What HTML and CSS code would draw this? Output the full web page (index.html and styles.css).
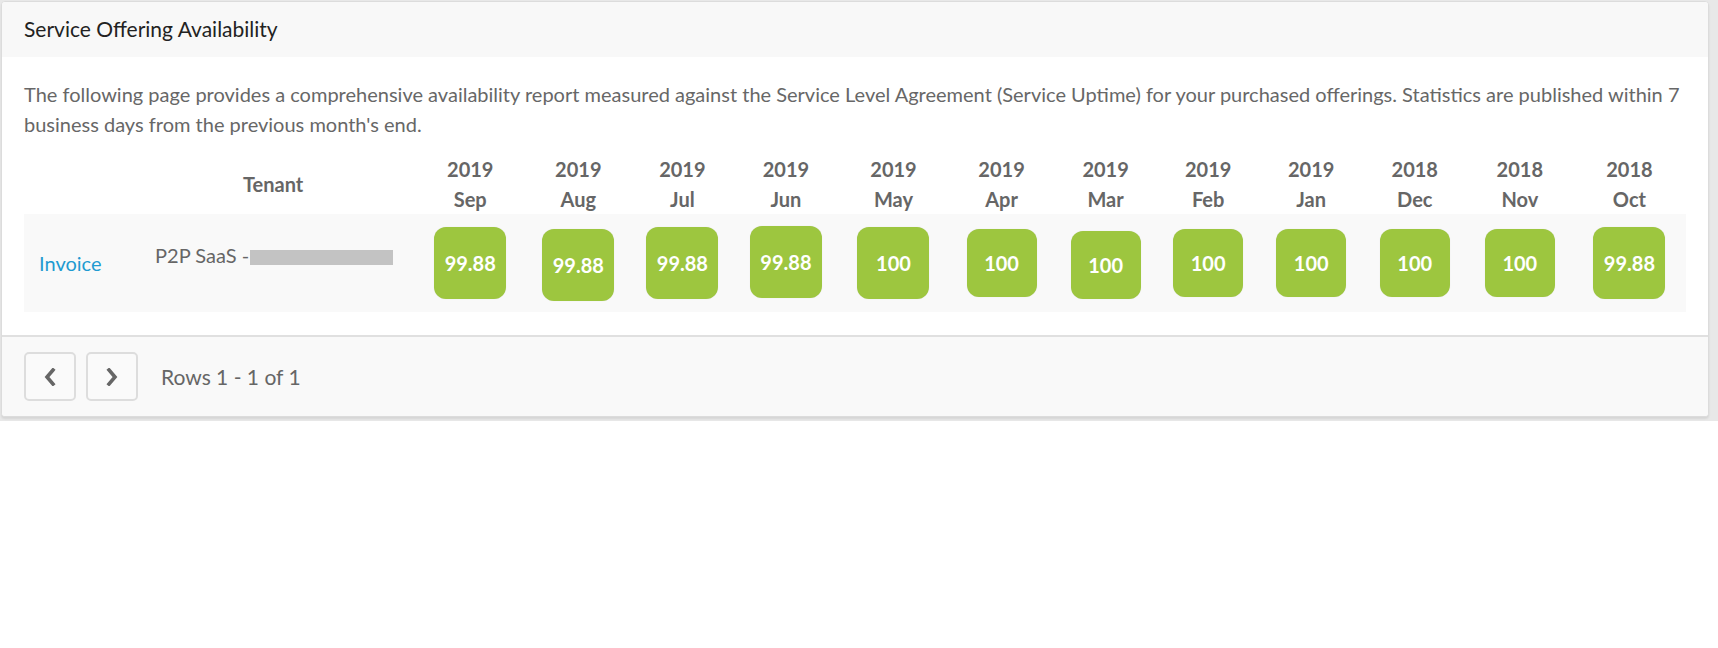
FILE: index.html
```html
<!DOCTYPE html>
<html lang="en">
<head>
<meta charset="utf-8">
<title>Service Offering Availability</title>
<link rel="stylesheet" href="styles.css">
</head>
<body>
<div class="frame">
  <section class="panel">
    <header class="panel-head">
      <h2 class="panel-title">Service Offering Availability</h2>
    </header>
    <div class="panel-body">
      <p class="intro">The following page provides a comprehensive availability report measured against the Service Level Agreement (Service Uptime) for your purchased offerings. Statistics are published within 7 business days from the previous month's end.</p>
      <table class="avail">
        <colgroup>
          <col class="c-offer">
          <col class="c-tenant">
          <col style="width:110px"><col style="width:106px"><col style="width:102px"><col style="width:105px">
          <col style="width:110px"><col style="width:106px"><col style="width:102px"><col style="width:103px">
          <col style="width:103px"><col style="width:104px"><col style="width:106px"><col style="width:113px">
        </colgroup>
        <thead>
          <tr>
            <th></th>
            <th class="th-tenant">Tenant</th>
            <th>2019<br>Sep</th>
            <th>2019<br>Aug</th>
            <th>2019<br>Jul</th>
            <th>2019<br>Jun</th>
            <th>2019<br>May</th>
            <th>2019<br>Apr</th>
            <th>2019<br>Mar</th>
            <th>2019<br>Feb</th>
            <th>2019<br>Jan</th>
            <th>2018<br>Dec</th>
            <th>2018<br>Nov</th>
            <th>2018<br>Oct</th>
          </tr>
        </thead>
        <tbody>
          <tr>
            <td class="offer"><a href="#" class="offer-link">Invoice</a></td>
            <td class="tenant">P2P SaaS - <span class="redacted"></span></td>
            <td><span class="pill">99.88</span></td>
            <td><span class="pill pill-low">99.88</span></td>
            <td><span class="pill">99.88</span></td>
            <td><span class="pill pill-high">99.88</span></td>
            <td><span class="pill">100</span></td>
            <td><span class="pill pill-short">100</span></td>
            <td><span class="pill pill-low pill-short">100</span></td>
            <td><span class="pill pill-short">100</span></td>
            <td><span class="pill pill-short">100</span></td>
            <td><span class="pill pill-short">100</span></td>
            <td><span class="pill pill-short">100</span></td>
            <td><span class="pill">99.88</span></td>
          </tr>
        </tbody>
      </table>
    </div>
    <footer class="panel-foot">
      <button class="pager-btn" type="button" aria-label="Previous">
        <svg width="12" height="18" viewBox="0 0 12 18"><polyline points="9,2 3,9 9,16" fill="none" stroke="#666" stroke-width="3.6" stroke-linecap="square" stroke-linejoin="miter"/></svg>
      </button>
      <button class="pager-btn" type="button" aria-label="Next">
        <svg width="12" height="18" viewBox="0 0 12 18"><polyline points="3,2 9,9 3,16" fill="none" stroke="#666" stroke-width="3.6" stroke-linecap="square" stroke-linejoin="miter"/></svg>
      </button>
      <span class="pager-info">Rows 1 - 1 of 1</span>
    </footer>
  </section>
</div>
</body>
</html>
```
FILE: styles.css
```css
* {
  box-sizing: border-box;
}

html, body {
  margin: 0;
  background: #ffffff;
}

body {
  font-family: Lato, "Open Sans", sans-serif;
  color: #666666;
}

.frame {
  background: #e8e8e8;
  padding: 1px 9px 4px 1px;
}

.panel {
  background: #ffffff;
  border: 1px solid #dcdcdc;
  border-radius: 4px;
  box-shadow: 0 2px 2px rgba(0, 0, 0, 0.08);
  overflow: hidden;
}

.panel-head {
  background: #f8f8f8;
  padding: 12px 22px 13px;
}

.panel-title {
  margin: 0;
  font-size: 21px;
  line-height: 30px;
  font-weight: 400;
  color: #222222;
}

.panel-body {
  padding: 22px 22px 23px;
}

.intro {
  margin: 0;
  font-size: 20px;
  line-height: 30px;
  color: #676767;
}

.avail {
  width: 100%;
  table-layout: fixed;
  border-collapse: collapse;
  border-spacing: 0;
}

.c-offer {
  width: 119px;
}

.c-tenant {
  width: 272px;
}

.avail th {
  padding: 15px 0 0;
  font-size: 20px;
  line-height: 30px;
  font-weight: 700;
  color: #666666;
  text-align: center;
  vertical-align: middle;
}

.avail th.th-tenant {
  padding-left: 12px;
  padding-right: 24px;
}

.avail td {
  background: #f9f9f9;
  padding: 13px 0;
  text-align: center;
  vertical-align: middle;
  font-size: 20px;
  line-height: 30px;
}

.avail td.offer {
  text-align: left;
  padding-left: 15px;
}

.offer-link {
  color: #1f9bd1;
  text-decoration: none;
}

.avail td.tenant {
  text-align: left;
  padding-left: 12px;
  padding-bottom: 29px;
  color: #666666;
  white-space: nowrap;
}

.redacted {
  display: inline-block;
  width: 143px;
  height: 15px;
  margin-left: -4px;
  background: #c3c3c3;
  vertical-align: -2px;
}

.pill {
  display: inline-flex;
  align-items: center;
  justify-content: center;
  width: 72px;
  height: 72px;
  border-radius: 12px;
  background: #9dc63f;
  color: #ffffff;
  font-weight: 700;
  font-size: 20px;
  box-shadow: 0 0 1px rgba(0, 0, 0, 0.12);
  vertical-align: middle;
}

.pill-short {
  width: 70px;
  height: 68px;
}

.pill-low {
  position: relative;
  top: 2px;
}

.pill-high {
  position: relative;
  top: -1px;
}

.panel-foot {
  display: flex;
  align-items: center;
  gap: 10px;
  background: #f9f9f9;
  border-top: 2px solid #e0e0e0;
  padding: 15px 22px 15px;
}

.pager-btn {
  display: flex;
  align-items: center;
  justify-content: center;
  width: 52px;
  height: 49px;
  padding: 0;
  background: #fafafa;
  border: 2px solid #dddddd;
  border-radius: 5px;
}

.pager-info {
  margin-left: 13px;
  font-size: 21px;
  line-height: 30px;
  color: #666666;
}
```
